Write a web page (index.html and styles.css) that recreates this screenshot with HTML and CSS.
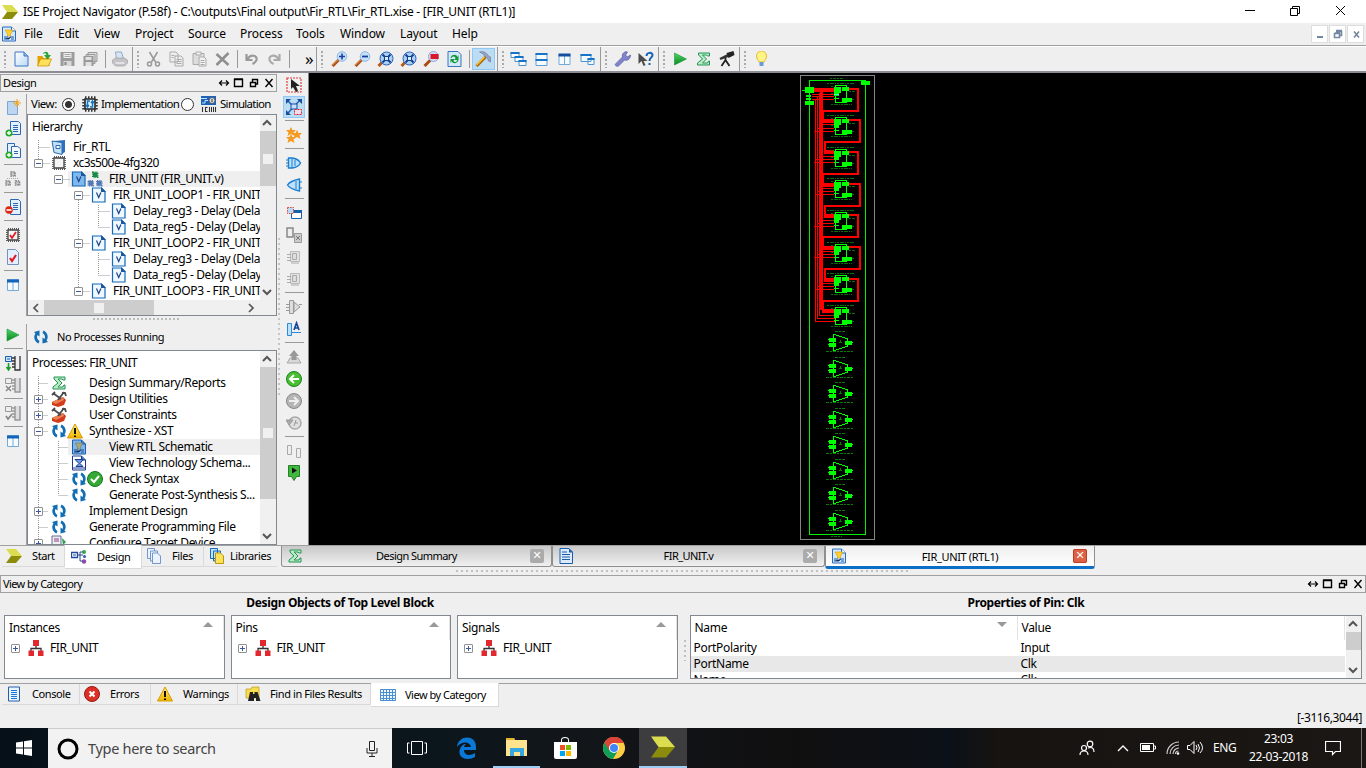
FILE: index.html
```html
<!DOCTYPE html>
<html lang="en">
<head>
<meta charset="utf-8">
<title>ISE Project Navigator</title>
<link rel="stylesheet" href="styles.css">
</head>
<body>
<svg class="defs" width="0" height="0">
<defs>
<linearGradient id="gb" x1="0" y1="0" x2="1" y2="1"><stop offset="0" stop-color="#fff"/><stop offset="1" stop-color="#bcd9f5"/></linearGradient>
<linearGradient id="gg" x1="0" y1="0" x2="0" y2="1"><stop offset="0" stop-color="#4fd36a"/><stop offset="1" stop-color="#078a1b"/></linearGradient>
<linearGradient id="gy" x1="0" y1="0" x2="0" y2="1"><stop offset="0" stop-color="#fff27a"/><stop offset="1" stop-color="#f0b400"/></linearGradient>
</defs>
<symbol id="logo" viewBox="0 0 16 16"><path d="M0 1h10l6 7H5z" fill="#dcdc50"/><path d="M5 8h11l-6 7H0z" fill="#8c8c0c"/></symbol>
<symbol id="rtl" viewBox="0 0 16 16"><path d="M1.500 1h9l4 4v10h-13z" fill="#d5e7fa" stroke="#2a6cc0"/><path d="M10.500 1v4h4" fill="#fff" stroke="#2a6cc0"/><path d="M4 4h8L9.500 8v2h-3V8z" fill="#ffd12e" stroke="#d79c00" stroke-width=".6"/><path d="M3 11h4m2 0h4M3 13h5l2-2m0 2h3" stroke="#1d58a8"/></symbol>
<symbol id="rtls" viewBox="0 0 16 16"><path d="M1.500 1h9l4 4v10h-13z" fill="#7fb5e8" stroke="#1d5cb0"/><path d="M10.500 1v4h4" fill="#3c78c8" stroke="#1d5cb0"/><path d="M4 4h8L9.500 8v2h-3V8z" fill="#a8a878" stroke="#6c7c60" stroke-width=".6"/><path d="M3 11h4m2 0h4M3 13h5l2-2m0 2h3" stroke="#1d4890"/></symbol>
<symbol id="tech" viewBox="0 0 16 16"><path d="M1.500 1h9l4 4v10h-13z" fill="#fff" stroke="#1d3c90"/><path d="M10.500 1v4h4" fill="#3c78c8" stroke="#1d3c90"/><path d="M4 4.500h8l-3 4 3 3H5l3-3z" fill="#6aa0e0" stroke="#1d3c90"/><path d="M2 13h12" stroke="#1d3c90"/></symbol>
<symbol id="new" viewBox="0 0 16 16"><path d="M1.500 1h9l4 4v10h-13z" fill="url(#gb)" stroke="#3a76c4"/><path d="M10.500 1v4h4" fill="#8db9e8" stroke="#3a76c4"/></symbol>
<symbol id="doc" viewBox="0 0 16 16"><path d="M2 .5h9l3.500 3.500v11.500H2z" fill="#dcebfc" stroke="#1b5cab"/><path d="M11 .5v4h4" fill="#1b5cab"/><path d="M4 4h5M4 6.500h8M4 9h8M4 11.500h8" stroke="#1b5cab" stroke-width="1.200"/></symbol>
<symbol id="console" viewBox="0 0 16 16"><path d="M2.500 1h11v14h-11z" fill="#e8f3ff" stroke="#2a5ca8"/><path d="M5 4.500h6M5 6.500h6M5 8.500h6M5 10.500h6M5 12.500h6" stroke="#1878d8"/></symbol>
<symbol id="open" viewBox="0 0 16 16"><path d="M1 5h5l1 2h6v8H1z" fill="#e4a200"/><path d="M4 8h11l-3 7H1z" fill="#ffe05a" stroke="#c88c00" stroke-width=".7"/><path d="M6 3c2-3 6-3 6 1h2.500L11 8.500 7.500 4H10C9.500 2 8 2 6 3z" fill="#29a338"/></symbol>
<symbol id="save" viewBox="0 0 16 16"><path d="M1 1h14v14H1z" fill="#9c9c9c"/><path d="M4 2h8v5H4z" fill="#ececec"/><path d="M4 10h8v5H4z" fill="#d8d8d8"/><path d="M5 11h2v3H5z" fill="#888"/><path d="M5 3.500h6M5 5.500h6" stroke="#aaa"/></symbol>
<symbol id="saveall" viewBox="0 0 16 16"><path d="M5.500 1.500h9v9h-9zM3.500 3.500h9v9h-9z" fill="#ddd" stroke="#999"/><path d="M1 5h10v10H1z" fill="#999"/><path d="M3 6h6v3H3zM3 11h6v4H3z" fill="#e2e2e2"/></symbol>
<symbol id="print" viewBox="0 0 16 16"><path d="M4 1h6l2 7H5z" fill="#d7e5f5" stroke="#8faac8"/><path d="M1 9l3-2h9l3 2v3l-3 3H4l-3-3z" fill="#c4c4c8" stroke="#999" stroke-width=".6"/><path d="M4 12h9" stroke="#fff"/></symbol>
<symbol id="cut" viewBox="0 0 16 16" fill="none" stroke="#999"><path d="M4 1l6 10M12 1L6 11" stroke-width="1.500"/><circle cx="4" cy="13" r="2" stroke-width="1.500"/><circle cx="12" cy="13" r="2" stroke-width="1.500"/></symbol>
<symbol id="copy" viewBox="0 0 16 16" fill="#eee" stroke="#aaa"><path d="M1.500 1h6l2 2v8h-8zM6.500 5h6l2 2v8h-8z"/><path d="M8 8.500h5M8 10.500h5M8 12.500h5M3 4.500h3M3 6.500h2"/></symbol>
<symbol id="paste" viewBox="0 0 16 16" fill="#ddd" stroke="#aaa"><path d="M1.500 2.500h11v11h-11z"/><path d="M4.500 1h5v3h-5zM7.500 6h5l2 2v7h-7z" fill="#f3f3f3"/><path d="M9 9.500h4M9 11.500h4M9 13.500h4"/></symbol>
<symbol id="del" viewBox="0 0 16 16"><path d="M2 3l12 11M14 2L2 14" stroke="#8e8e8e" stroke-width="2.500"/></symbol>
<symbol id="undo" viewBox="0 0 16 16"><path d="M3 3v6h6M4 8c3-5 10-4 9 1-.5 2-2 3-4 4" fill="none" stroke="#999" stroke-width="2.200"/></symbol>
<symbol id="redo" viewBox="0 0 16 16"><path d="M13 3v6H7M12 8C9 3 2 4 3 9c.5 2 2 3 4 4" fill="none" stroke="#aaa" stroke-width="2.200"/></symbol>
<symbol id="zin" viewBox="0 0 16 16"><path d="M1 15l6-6" stroke="#a84c16" stroke-width="3"/><path d="M1 14l5-5" stroke="#f4b15e"/><circle cx="10.500" cy="5.500" r="4.800" fill="#c4e3fb" stroke="#8fb5e4"/><path d="M10.500 2.500v6M7.500 5.500h6" stroke="#1c3f9a" stroke-width="1.600"/></symbol>
<symbol id="zout" viewBox="0 0 16 16"><path d="M1 15l6-6" stroke="#a84c16" stroke-width="3"/><path d="M1 14l5-5" stroke="#f4b15e"/><circle cx="10.500" cy="5.500" r="4.800" fill="#c4e3fb" stroke="#8fb5e4"/><path d="M7.500 5.500h6" stroke="#1c3f9a" stroke-width="1.800"/></symbol>
<symbol id="zfull" viewBox="0 0 16 16"><path d="M1 15l4-4" stroke="#b45a18" stroke-width="3"/><circle cx="9" cy="7.500" r="6.500" fill="#a9d1f6" stroke="#2d61b5"/><path d="M5 3.500l8 8M13 3.500l-8 8" stroke="#123c87" stroke-width="1.800"/><path d="M7 5.500h4v4H7z" fill="#d5edff" stroke="#123c87"/></symbol>
<symbol id="zsel" viewBox="0 0 16 16"><path d="M1 15l6-6" stroke="#a84c16" stroke-width="3"/><circle cx="10" cy="5.500" r="5" fill="#d5dbf4" stroke="#93a5d8"/><path d="M7 3h8v5H7z" fill="#d8172b"/></symbol>
<symbol id="refresh" viewBox="0 0 16 16"><path d="M1.500.500h10l3 3v12h-13z" fill="#d3e8fb" stroke="#3977bd"/><path d="M4 7c1-4 6-4 7-1l1-2v5H8l1-2c-1-2-3-2-4 0zM12 9c-1 4-6 4-7 1l-1 2V8h4L7 10c1 2 3 1 4-1z" fill="#109a33"/></symbol>
<symbol id="hammer" viewBox="0 0 16 16"><path d="M1 15l9-9" stroke="#a9660c" stroke-width="3"/><path d="M1 14l8-8" stroke="#ffc72a" stroke-width="1.500"/><path d="M4 1c5-1 7 1 9 4l2 1v5l-2-1-1-3-3-2-1-2z" fill="#9ba6c5" stroke="#66718f" stroke-width=".6"/></symbol>
<symbol id="casc" viewBox="0 0 16 16"><path d="M.500 1.500h8v5h-8zM4.500 5.500h8v5h-8zM8.500 9.500h7v5h-7z" fill="#fff" stroke="#4b90d0"/><path d="M0 2h9M4 6h9M8 10h8" stroke="#1773c8" stroke-width="2"/></symbol>
<symbol id="tileh" viewBox="0 0 16 16"><path d="M2.500 2.500h11v12h-11z" fill="#f6fbff" stroke="#5ba0d8"/><path d="M2 3h12M2 9h12" stroke="#1875c8" stroke-width="2"/></symbol>
<symbol id="tilev" viewBox="0 0 16 16"><path d="M2.500 3.500h11v10h-11zM8 4v10" fill="#f6fbff" stroke="#75aad8"/><path d="M2 4h12" stroke="#144f9e" stroke-width="3"/></symbol>
<symbol id="winf" viewBox="0 0 16 16"><path d="M1.500 3.500h10v7h-10zM8.500 7.500h6v6h-6z" fill="#f6fbff" stroke="#4b96d6"/><path d="M1 4h11M8 8h7" stroke="#1773c8" stroke-width="2"/></symbol>
<symbol id="wrench" viewBox="0 0 16 16"><path d="M1 13l7-7c-1-3 2-6 5-5l-2 3 2 2 3-2c0 4-3 6-6 5l-6 6c-2 1-4-1-3-2z" fill="#8285c9" stroke="#5356a0" stroke-width=".7"/></symbol>
<symbol id="help" viewBox="0 0 16 16"><path d="M1 2v11l3-3 2 5 2-1-2-4h4z" fill="#4a4a4a"/><path d="M9 5c0-4 6-4 6-1 0 3-3 2-3 6m0 2v2" fill="none" stroke="#1464b4" stroke-width="2"/></symbol>
<symbol id="play" viewBox="0 0 16 16"><path d="M2 2l12 6-12 6z" fill="url(#gg)" stroke="#17953a" stroke-width=".6"/></symbol>
<symbol id="sigma" viewBox="0 0 16 16"><path d="M3 2h11v3h-2l-1-1H7l4 4-4 4h5l1-2h1v4H2v-2l5-4-4-4z" fill="#b9ecc6" stroke="#229554"/></symbol>
<symbol id="scope" viewBox="0 0 16 16"><path d="M1 7l8-4 1 3-8 3z" fill="#333"/><path d="M8 2l7-2 1 4-6 3z" fill="#222"/><path d="M7 7v2l-4 6M7 9l4 6" stroke="#222" stroke-width="1.800" fill="none"/></symbol>
<symbol id="bulb" viewBox="0 0 16 16"><path d="M5.500 11C5 9 3 8 3 5a5 5 0 0110 0c0 3-2 4-2.500 6z" fill="#fff48a" stroke="#e0b000" stroke-width=".8"/><path d="M6 11h4v4H6z" fill="#6d99d8"/></symbol>
<symbol id="newsrc" viewBox="0 0 16 16"><path d="M2.500 2.500h10v13h-10z" fill="#bcd6f2" stroke="#7ea5d2"/><path d="M12 0v8M8 4h8M9.500 1.500l5 5M14.500 1.500l-5 5" stroke="#f6a416"/></symbol>
<symbol id="adddoc" viewBox="0 0 16 16"><path d="M5.500.500h8l2 2v11h-10z" fill="#e3f0ff" stroke="#2c68b2"/><path d="M8 4.500h5M8 6.500h5M8 8.500h5M8 10.500h5" stroke="#2c68b2"/><circle cx="4" cy="12" r="3.500" fill="#25a82c"/><path d="M4 10v4M2 12h4" stroke="#fff" stroke-width="1.300"/></symbol>
<symbol id="addcopy" viewBox="0 0 16 16"><path d="M2.500.500h7v11h-7z" fill="#e3f0ff" stroke="#2c68b2"/><path d="M6.500 3.500h6l3 2v9h-9z" fill="#f2f8ff" stroke="#2c68b2"/><path d="M9 8.500h4M9 10.500h4" stroke="#2c68b2"/><circle cx="4" cy="12" r="3.500" fill="#25a82c"/><path d="M4 10v4M2 12h4" stroke="#fff" stroke-width="1.300"/></symbol>
<symbol id="deldoc" viewBox="0 0 16 16"><path d="M5.500.500h8l2 2v13h-10z" fill="#e3f0ff" stroke="#2c68b2"/><path d="M8 4.500h5M8 6.500h5M8 8.500h5M8 10.500h5" stroke="#2c68b2"/><circle cx="4" cy="11" r="3.800" fill="#dd2714"/><path d="M1.500 11h5" stroke="#fff" stroke-width="1.600"/></symbol>
<symbol id="hier" viewBox="0 0 16 16"><path d="M6 1h4v4H6zM1 10h4v4H1zM10.500 10h4v4h-4z" fill="#c8c8c8" stroke="#888" stroke-width="1.600" stroke-dasharray="1.500 .7"/><path d="M2 7.500h12" stroke="#aaa" stroke-dasharray="1 1"/></symbol>
<symbol id="chip" viewBox="0 0 16 16"><path d="M3 3h10v10H3z" fill="#f6f6f6" stroke="#444" stroke-width="1.300"/><path d="M3 2h11M3 14h11M2 3v11M14 3v11" stroke="#555" stroke-width="1.800" stroke-dasharray="1 1"/></symbol>
<symbol id="chipc" viewBox="0 0 16 16"><use href="#chip"/><path d="M5 8l2 3 4-6" stroke="#e31b23" stroke-width="1.800" fill="none"/></symbol>
<symbol id="chipi" viewBox="0 0 16 16"><path d="M3 3h10v10H3z" fill="#e4f3ff" stroke="#222" stroke-width="1.600"/><path d="M3 1.500h11M3 14.500h11M1.500 3v11M14.500 3v11" stroke="#333" stroke-width="2.500" stroke-dasharray="1.500 1.500"/><path d="M8 5H5.500v5M8 11h2.500V6M4 9l1.500 2L7 9M9 7l1.500-2L12 7" stroke="#1878bd" stroke-width="1.500" fill="none"/></symbol>
<symbol id="doccheck" viewBox="0 0 16 16"><path d="M2.500.500h8l3 3v12h-11z" fill="#e3f0ff" stroke="#7393be"/><path d="M5 9l2 3 4-6" stroke="#e31b23" stroke-width="2.200" fill="none"/></symbol>
<symbol id="cols" viewBox="0 0 16 16"><path d="M2.500 2.500h11v11h-11zM8 4v10" fill="#f6fbff" stroke="#75aad8"/><path d="M2 4h12" stroke="#1265bb" stroke-width="3"/></symbol>
<symbol id="sim" viewBox="0 0 16 16"><path d="M0 0h15v9H0z" fill="#1a63b8"/><path d="M0 2.500h6M1 7h3V4.500h3" stroke="#bfe0ff" fill="none"/><circle cx="11" cy="4.500" r="3" fill="#ddd" stroke="#556"/><path d="M11 3v3" stroke="#333"/><path d="M0 10h16v6H0z" fill="#e6e6e6"/><path d="M1.500 11v5M4 11.500h2.500M4 15.500h2.500M4.500 11v5M8.500 11v5M10.500 11v5M12.500 11v5M14.500 11v5" stroke="#333" fill="none"/></symbol>
<symbol id="proj" viewBox="0 0 16 16"><path d="M3 2l11-1v12l-3 2z" fill="#2e73bd"/><path d="M1 2l10 1.500v12l-8-2z" fill="#c3e0f8" stroke="#2968aa"/><path d="M5 6.500h4v3H5z" fill="#fff" stroke="#2968aa"/></symbol>
<symbol id="v" viewBox="0 0 16 16"><path d="M1.500 1h9l3.500 3.500V15H1.500z" fill="#eff8ff" stroke="#1669b8" stroke-width="1.200"/><path d="M10 0l5 5h-5z" fill="#1b57a0"/><path d="M5.500 5.500l2.200 5 2.200-5" stroke="#1c4288" stroke-width="1.200" fill="none"/></symbol>
<symbol id="vs" viewBox="0 0 16 16"><path d="M1.500 1h9l3.500 3.500V15H1.500z" fill="#7fb8ed" stroke="#1669b8" stroke-width="1.200"/><path d="M10 0l5 5h-5z" fill="#1b57a0"/><path d="M5.500 5.500l2.200 5 2.200-5" stroke="#1c4288" stroke-width="1.200" fill="none"/></symbol>
<symbol id="top" viewBox="0 0 16 16"><path d="M6 1.500h4.500V6H6z" fill="#188a42" stroke="#188a42" stroke-dasharray="1 .7" stroke-width="2"/><path d="M1.500 10H6v4.500H1.500zM10 10h4.500v4.500H10z" fill="#5378b8" stroke="#5378b8" stroke-width="2" stroke-dasharray="1 .7"/></symbol>
<symbol id="cycle" viewBox="0 0 16 16"><path d="M6.500 1.500L1 3l1.500 1.500C0 8 1.500 12.500 5.500 14.500l1-2.500C4 10.500 3.500 8 4.500 6l2 1.500zM9.500 14.500L15 13l-1.500-1.500c2.500-3.500 1-8-3-10l-1 2.500c2.500 1.500 3 4 2 6l-2-1.500z" fill="#126eb4"/></symbol>
<symbol id="tools" viewBox="0 0 16 16"><path d="M1 11l11-5 3 3-2 5-6 2-6-2z" fill="#d03c1c"/><path d="M1 11l11-5 1 3-8 4z" fill="#f08050"/><path d="M2 2l8 6M1 4l3-3M13 1L7 9M11 2h3l1 3" stroke="#4b4b4b" stroke-width="1.800" fill="none"/></symbol>
<symbol id="warn" viewBox="0 0 16 16"><path d="M8 1l7.500 14H.500z" fill="url(#gy)" stroke="#d69b00"/><path d="M8 5v6m0 1.500v1.500" stroke="#111" stroke-width="2"/></symbol>
<symbol id="ok" viewBox="0 0 16 16"><circle cx="8" cy="8" r="7.500" fill="#35a935" stroke="#16751f"/><path d="M4 8l3 3 5-6" stroke="#fff" stroke-width="2" fill="none"/></symbol>
<symbol id="err" viewBox="0 0 16 16"><circle cx="8" cy="8" r="7.500" fill="#dc3027" stroke="#991811"/><path d="M5.500 5.500l5 5m0-5l-5 5" stroke="#fff" stroke-width="2"/></symbol>
<symbol id="conf" viewBox="0 0 16 16"><path d="M1 1h9v9H1z" fill="#eee" stroke="#666b9c"/><path d="M3 4h5M3 6h5" stroke="#8c3c8c"/><path d="M11 3l4 4-3 3z" fill="#27a04a"/></symbol>
<symbol id="arrow" viewBox="0 0 16 16"><path d="M1 1h14v14H1z" fill="none" stroke="#e33b3b" stroke-width="1.200" stroke-dasharray="2 1"/><path d="M5 2v10l2-2 3 5 2-1-2-5h4z" fill="#222"/></symbol>
<symbol id="move" viewBox="0 0 16 16"><path d="M2 2l11 11M14 1L2 14" stroke="#1d65b4" stroke-width="1.500"/><path d="M0 0h5L0 5zM16 0h-5l5 5zM0 16v-5l5 5z" fill="#164f9e"/><path d="M5 5h6v5H5z" fill="#c5e2fb" stroke="#164f9e"/><path d="M8.500 10.500h7v5h-7z" fill="#e8dff0" stroke="#e01f2b" stroke-dasharray="2 1"/></symbol>
<symbol id="stars" viewBox="0 0 16 16" fill="#f59a23"><path id="st" d="M5 0l1.500 3H10L7.500 5.500 8.500 9 5 7 1.500 9l1-3.500L0 3h3.500z"/><use href="#st" x="6" y="3"/><use href="#st" x="0" y="7"/></symbol>
<symbol id="gr" viewBox="0 0 16 16"><path d="M2.500 3h4q6 1 8 5-2 4-8 5h-4z" fill="#bde1fb" stroke="#1c7fd1" stroke-width="1.400"/><path d="M6 3v10M0 5h2M0 8h2M0 11h2M9 5v6" stroke="#1c7fd1"/></symbol>
<symbol id="gl" viewBox="0 0 16 16"><path d="M13.500 2Q4 4 1.500 8q2.500 4 12 6z" fill="#bde1fb" stroke="#1c7fd1" stroke-width="1.400"/><path d="M10 4v8M14 5h2M14 11h2" stroke="#1c7fd1"/></symbol>
<symbol id="selwin" viewBox="0 0 16 16"><path d="M5.500 5.500h10v8h-10z" fill="#fff" stroke="#1460ad"/><path d="M5 6.500h11" stroke="#1460ad" stroke-width="3"/><path d="M1.500 2.500h6v6h-6z" fill="#b8d8f7" stroke="#e14b2c" stroke-dasharray="1.500 1"/></symbol>
<symbol id="two" viewBox="0 0 16 16"><path d="M1 1h6v9H1z" fill="#eee" stroke="#888" stroke-width="1.500"/><path d="M8.500 6.500h7v9h-7z" fill="#ccc" stroke="#999"/><path d="M10 9l4 4m0-4l-4 4" stroke="#777"/></symbol>
<symbol id="gchip" viewBox="0 0 16 16"><path d="M4.500 2.500h9v10h-9z" fill="#e2e2e2" stroke="#bbb"/><path d="M6.500 4.500h4v6h-4zM1 5.500h4M1 8.500h4M1 11.500h4M13 14H5" fill="#ddd" stroke="#aaa"/></symbol>
<symbol id="ggate" viewBox="0 0 16 16"><path d="M3.500 1.500h4v13h-4zM8 3l6 5-6 5z" fill="#ddd" stroke="#999"/><path d="M0 5.500h3M0 8.500h3M0 11.500h3M13 5.500h3" stroke="#999"/></symbol>
<symbol id="fa" viewBox="0 0 16 16"><path d="M1.500 2.500h4v12h-4zM5 11.500h10" fill="#bde1fb" stroke="#2c8add"/><path d="M8 9l2.500-7L13 9M9 7h3" stroke="#174a98" stroke-width="1.700" fill="none"/></symbol>
<symbol id="gup" viewBox="0 0 16 16"><path d="M4 9h8l3 5H1z" fill="#d8d8d8" stroke="#aaa"/><path d="M8 1l5 6h-2.500v4h-5V7H3z" fill="#999"/></symbol>
<symbol id="back" viewBox="0 0 16 16"><circle cx="8" cy="8" r="7.500" fill="#46be2f" stroke="#16851f"/><path d="M13 8H4m4-4L4 8l4 4" stroke="#fff" stroke-width="2" fill="none"/></symbol>
<symbol id="fwd" viewBox="0 0 16 16"><circle cx="8" cy="8" r="7.500" fill="#b4b4b4" stroke="#888"/><path d="M3 8h9M8 4l4 4-4 4" stroke="#eee" stroke-width="2" fill="none"/></symbol>
<symbol id="hist" viewBox="0 0 16 16"><circle cx="9" cy="8" r="6" fill="#e0e0e0" stroke="#aaa" stroke-width="1.500"/><path d="M0 5h7l-4 5zM9 8h3M10 5L8 11" fill="#aaa" stroke="#999"/></symbol>
<symbol id="rects" viewBox="0 0 16 16"><path d="M1.500 2.500h4v9h-4zM10.500 5.500h4v9h-4z" fill="#eee" stroke="#aaa"/></symbol>
<symbol id="mark" viewBox="0 0 16 16"><path d="M2.500.500h11v11h-3l-2.500 4-2.500-4h-3z" fill="#40b83d" stroke="#267e28"/><path d="M6 2.500l5 3-5 3z" fill="#111"/></symbol>
<symbol id="pd" viewBox="0 0 16 16"><path d="M.500 1.500h6v5h-6z" fill="#cfe5fb" stroke="#1b5da8"/><path d="M2 4h3" stroke="#1b5da8"/><path d="M3.500 8v6m-2-2l2 3 2-3" stroke="#159d24" stroke-width="1.500" fill="none"/><path d="M10 1v14h5V1M7 3h3m-3 3h3m-3 3h3m-3 3h3" stroke="#333" stroke-width="1.300" fill="none"/></symbol>
<symbol id="px" viewBox="0 0 16 16"><path d="M.500 1.500h6v5h-6z" fill="#eee" stroke="#999"/><path d="M1 9l5 5m0-5l-5 5" stroke="#888" stroke-width="1.500"/><path d="M10 1v14h5V1M7 3h3m-3 3h3m-3 3h3m-3 3h3" stroke="#999" stroke-width="1.500" fill="#ddd"/></symbol>
<symbol id="pc" viewBox="0 0 16 16"><path d="M.500 1.500h6v5h-6z" fill="#eee" stroke="#999"/><path d="M1 11l2 3 4-5" stroke="#888" stroke-width="1.700" fill="none"/><path d="M10 1v14h5V1M7 3h3m-3 3h3m-3 3h3m-3 3h3" stroke="#999" stroke-width="1.500" fill="#ddd"/></symbol>
<symbol id="dsg" viewBox="0 0 16 16"><path d="M.500 3.500h6v5h-6z" fill="#fff" stroke="#234a9b" stroke-width="1.300"/><path d="M2 6h3M7 6h5M9 3v9M9 3h3M9 12h3" stroke="#234a9b"/><circle cx="13" cy="3" r="2" fill="#3aa04a"/><circle cx="13.500" cy="7.500" r="1.500" fill="#3459ad"/><circle cx="13" cy="12.500" r="2.200" fill="#884aa8"/></symbol>
<symbol id="files" viewBox="0 0 16 16" fill="#eaf3ff" stroke="#7297cc"><path d="M1.500.500h7v10h-7z"/><path d="M4.500 3h7v10h-7z"/><path d="M6.500 5h5l3 3v7.500h-8z"/></symbol>
<symbol id="libs" viewBox="0 0 16 16"><path d="M1.500.500h7v10h-7zM4.500 3h7v10h-7z" fill="#bfe0ff" stroke="#1769b4"/><path d="M6.500 5h5l3 3v7.500h-8z" fill="#ffe25a" stroke="#b99810"/></symbol>
<symbol id="find" viewBox="0 0 16 16"><path d="M1 3h5l1-2h7v11H1z" fill="#f8dc50" stroke="#b58a00" stroke-width=".6"/><path d="M5 6h3v2h1.500V6h3l3 9h-4.500v-3H9v3H3z" fill="#222"/></symbol>
<symbol id="grid" viewBox="0 0 16 16"><path d="M.500 2.500h15v11H.500zM3.500 2v12M6.500 2v12M9.500 2v12M12.500 2v12M0 5.500h16M0 8.500h16M0 11.500h16" fill="#eef7ff" stroke="#4a8ed0"/></symbol>
<symbol id="inst" viewBox="0 0 16 16"><path d="M8 6v3M3 11V8.500h10V11" stroke="#333" stroke-width="1.300" fill="none"/><path d="M5 0h6v6H5zM.500 10.500H6V16H.500zM10 10.500h5.500V16H10z" fill="#e2282e"/></symbol>
<symbol id="up" viewBox="0 0 16 16"><path d="M4 10l4-4 4 4" fill="none" stroke="#555" stroke-width="2"/></symbol>
<symbol id="dn" viewBox="0 0 16 16"><path d="M4 6l4 4 4-4" fill="none" stroke="#555" stroke-width="2"/></symbol>
<symbol id="lf" viewBox="0 0 16 16"><path d="M10 4L6 8l4 4" fill="none" stroke="#555" stroke-width="1.700"/></symbol>
<symbol id="rt" viewBox="0 0 16 16"><path d="M6 4l4 4-4 4" fill="none" stroke="#555" stroke-width="1.700"/></symbol>
<symbol id="dock" viewBox="0 0 60 12"><path d="M3.500 6h9M6 3.500L3.500 6 6 8.500M10 3.500L12.500 6 10 8.500" fill="none" stroke="#000" stroke-width="1.200"/><path d="M18.500 2.500h8v7h-8zM18 2h9M34.500 5.500h5v4h-5zM36.500 5V2.500h5V7h-2M34 5.500h6M36 2.500h6M49.500 2l7 8M56.500 2l-7 8" fill="none" stroke="#000" stroke-width="1.400"/></symbol>
</svg>

<header class="title">
  <svg class="i"><use href="#logo"/></svg><span class="cap">ISE Project Navigator (P.58f) - C:\outputs\Final output\Fir_RTL\Fir_RTL.xise - [FIR_UNIT (RTL1)]</span>
  <svg class="winbtn" width="120" height="23" viewBox="0 0 120 23"><path d="M5 10.500h10M50.500 8.500h7v7h-7zM52.500 8V6.500h7v7H58M96 6l9 9M105 6l-9 9" fill="none" stroke="#000"/></svg>
</header>

<nav class="menu">
  <svg class="i"><use href="#rtl"/></svg>
  <span class="m1">File</span><span class="m2">Edit</span><span class="m3">View</span><span class="m4">Project</span><span class="m5">Source</span><span class="m6">Process</span><span class="m7">Tools</span><span class="m8">Window</span><span class="m9">Layout</span><span>Help</span>
  <svg class="mdi" width="54" height="20" viewBox="0 0 54 20"><path d="M.500 1.500h16v17h-16zM18.500 1.500h16v17h-16zM36.500 1.500h16v17h-16z" fill="#fff" stroke="#ddd"/><path d="M6 13h6" stroke="#7388a0" stroke-width="2"/><path d="M23.500 9.500h5v4h-5zM25 7.500h5.500v4H29M24 9h5M25 6.500h6M43 7.500l5 6m0-6l-5 6" fill="none" stroke="#7388a0" stroke-width="1.600"/></svg>
</nav>

<div class="tools">
  <div class="g g1"><b class="grip"></b><svg><use href="#new"/></svg><svg><use href="#open"/></svg><svg><use href="#save"/></svg><svg><use href="#saveall"/></svg><s></s><svg><use href="#print"/></svg></div>
  <div class="g g2"><b class="grip"></b><svg><use href="#cut"/></svg><svg><use href="#copy"/></svg><svg><use href="#paste"/></svg><svg><use href="#del"/></svg><s></s><svg><use href="#undo"/></svg><svg><use href="#redo"/></svg><s></s><span class="more">»</span></div>
  <div class="g g3"><b class="grip"></b><svg><use href="#zin"/></svg><svg><use href="#zout"/></svg><svg><use href="#zfull"/></svg><svg><use href="#zfull"/></svg><svg><use href="#zsel"/></svg><svg><use href="#refresh"/></svg><s></s><svg class="on"><use href="#hammer"/></svg></div>
  <div class="g g4"><b class="grip"></b><svg><use href="#casc"/></svg><svg><use href="#tileh"/></svg><svg><use href="#tilev"/></svg><svg><use href="#winf"/></svg></div>
  <div class="g g5"><b class="grip"></b><svg><use href="#wrench"/></svg><svg><use href="#help"/></svg></div>
  <div class="g g6"><b class="grip"></b><svg><use href="#play"/></svg><svg><use href="#sigma"/></svg><svg><use href="#scope"/></svg></div>
  <div class="g g7"><b class="grip"></b><svg><use href="#bulb"/></svg></div>
</div>

<main class="main">
  <section class="left">
    <div class="dockhead"><span>Design</span><svg width="60" height="12"><use href="#dock"/></svg></div>
    <div class="pane p1">
      <div class="side"><svg><use href="#newsrc"/></svg><svg><use href="#adddoc"/></svg><svg><use href="#addcopy"/></svg><s></s><svg><use href="#hier"/></svg><s></s><svg><use href="#deldoc"/></svg><s></s><svg><use href="#chipc"/></svg><svg><use href="#doccheck"/></svg><s></s><svg><use href="#cols"/></svg></div>
      <div class="col">
        <div class="view"><span class="vl">View:</span><i class="radio sel"></i><svg class="i a"><use href="#chipi"/></svg><span class="im">Implementation</span><i class="radio"></i><svg class="i b"><use href="#sim"/></svg><span class="si">Simulation</span></div>
        <div class="box">
          <div class="upper">
            <div class="tree">
              <svg class="lines" width="232" height="185"><path d="M10.500 25v20M10.500 32.500h11M10.500 48.500h11M30.500 64.500h11M50.500 80.500h11M50.500 85v96M50.500 128.500h11M50.500 176.500h11M70.500 90v21.500M70.500 96.500h11M70.500 112.500h11M70.500 138v21.500M70.500 144.500h11M70.500 160.500h11" stroke="#999" stroke-dasharray="1 1" fill="none"/></svg>
              <div class="th">Hierarchy</div>
              <div class="row"><i></i><svg class="i"><use href="#proj"/></svg><span>Fir_RTL</span></div>
              <div class="row"><i class="x"></i><svg class="i"><use href="#chip"/></svg><span class="t320">xc3s500e-4fg320</span></div>
              <div class="row k1 hl"><i class="x"></i><svg class="i"><use href="#vs"/></svg><svg class="i"><use href="#top"/></svg><span>FIR_UNIT (FIR_UNIT.v)</span></div>
              <div class="row k2"><i class="x"></i><svg class="i"><use href="#v"/></svg><span>FIR_UNIT_LOOP1 - FIR_UNIT</span></div>
              <div class="row k3"><i></i><svg class="i"><use href="#v"/></svg><span>Delay_reg3 - Delay (Delay</span></div>
              <div class="row k3"><i></i><svg class="i"><use href="#v"/></svg><span>Data_reg5 - Delay (Delay</span></div>
              <div class="row k2"><i class="x"></i><svg class="i"><use href="#v"/></svg><span>FIR_UNIT_LOOP2 - FIR_UNIT</span></div>
              <div class="row k3"><i></i><svg class="i"><use href="#v"/></svg><span>Delay_reg3 - Delay (Delay</span></div>
              <div class="row k3"><i></i><svg class="i"><use href="#v"/></svg><span>Data_reg5 - Delay (Delay</span></div>
              <div class="row k2"><i class="x"></i><svg class="i"><use href="#v"/></svg><span>FIR_UNIT_LOOP3 - FIR_UNIT</span></div>
            </div>
            <div class="vs"><svg class="i"><use href="#up"/></svg><b class="th1"><u></u></b><svg class="i"><use href="#dn"/></svg></div>
          </div>
          <div class="hs"><svg class="i"><use href="#lf"/></svg><b><u></u></b><svg class="i"><use href="#rt"/></svg></div>
        </div>
      </div>
    </div>
    <div class="hdots"></div>
    <div class="pane p2">
      <div class="side"><svg><use href="#play"/></svg><s></s><svg><use href="#pd"/></svg><svg><use href="#px"/></svg><s></s><svg><use href="#pc"/></svg><s></s><svg><use href="#cols"/></svg></div>
      <div class="col">
        <div class="status"><svg class="i"><use href="#cycle"/></svg><span>No Processes Running</span></div>
        <div class="box proc">
          <div class="tree">
            <svg class="lines" width="232" height="193"><path d="M10.500 25v168M10.500 32.500h10M10.500 48.500h10M10.500 64.500h10M10.500 80.500h10M30.500 90v54M30.500 96.500h10M30.500 112.500h10M30.500 128.500h10M30.500 144.500h10M10.500 160.500h10M10.500 176.500h10" stroke="#999" stroke-dasharray="1 1" fill="none"/></svg>
            <div class="th">Processes: FIR_UNIT</div>
            <div class="row"><i></i><em><svg class="i"><use href="#sigma"/></svg></em><span>Design Summary/Reports</span></div>
            <div class="row"><i class="x p"></i><em><svg class="i"><use href="#tools"/></svg></em><span>Design Utilities</span></div>
            <div class="row"><i class="x p"></i><em><svg class="i"><use href="#tools"/></svg></em><span>User Constraints</span></div>
            <div class="row"><i class="x"></i><em><svg class="i"><use href="#cycle"/></svg><svg class="i"><use href="#warn"/></svg></em><span>Synthesize - XST</span></div>
            <div class="row k1 hl"><i></i><em><svg class="i"><use href="#rtls"/></svg></em><span>View RTL Schematic</span></div>
            <div class="row k1"><i></i><em><svg class="i"><use href="#tech"/></svg></em><span>View Technology Schema...</span></div>
            <div class="row k1"><i></i><em><svg class="i"><use href="#cycle"/></svg><svg class="i"><use href="#ok"/></svg></em><span>Check Syntax</span></div>
            <div class="row k1"><i></i><em><svg class="i"><use href="#cycle"/></svg></em><span>Generate Post-Synthesis S...</span></div>
            <div class="row"><i class="x p"></i><em><svg class="i"><use href="#cycle"/></svg></em><span>Implement Design</span></div>
            <div class="row"><i></i><em><svg class="i"><use href="#cycle"/></svg></em><span>Generate Programming File</span></div>
            <div class="row"><i class="x p"></i><em><svg class="i"><use href="#conf"/></svg></em><span>Configure Target Device</span></div>
          </div>
          <div class="vs"><svg class="i"><use href="#up"/></svg><b class="th2"><u></u></b><svg class="i"><use href="#dn"/></svg></div>
        </div>
      </div>
    </div>
  </section>
  <div class="vdots"></div>
  <div class="mid"><svg><use href="#arrow"/></svg><svg class="on"><use href="#move"/></svg><s></s><svg><use href="#stars"/></svg><s></s><svg><use href="#gr"/></svg><svg><use href="#gl"/></svg><s></s><svg><use href="#selwin"/></svg><svg><use href="#two"/></svg><svg><use href="#gchip"/></svg><svg><use href="#gchip"/></svg><s></s><svg><use href="#ggate"/></svg><svg><use href="#fa"/></svg><s></s><svg><use href="#gup"/></svg><svg><use href="#back"/></svg><svg><use href="#fwd"/></svg><svg><use href="#hist"/></svg><s></s><svg><use href="#rects"/></svg><svg><use href="#mark"/></svg></div>
  <div class="canvas">
    <svg width="1057" height="472" viewBox="309 73 1057 472" shape-rendering="crispEdges">
      <defs>
        <g id="blk"><path d="M835.500 .5v17h11v-17z" fill="none" stroke="#0f0"/><path d="M834 2h7v6h-2v2h-5zM842 2h7v4h-7zM842 13h10v4h-10z" fill="#0f0"/><path d="M834 10.500h5M834 13.500h5" stroke="#0f0"/><path d="M827-1.500h28M831 19.500h21M849 6.500h6M831 1.500h3M852 14.500h3M831 8.500h3" stroke="#0b6a0b" stroke-dasharray="2 1 4 1 1 1"/></g>
        <g id="mx"><path d="M833.500-8v17M833-7.500h3M836-6.500h3M839-5.500h3M842-4.500h3M845-3.500h3M847.500-3v7M845 4.500h3M842 5.500h3M839 6.500h3M836 7.500h3M833 8.500h3" fill="none" stroke="#0f0"/><path d="M829-4h7v4h-7zM829 1h7v4h-7zM845-1h7v4h-7zM828-3h2v1h-2zM828 2h2v1h-2zM852 0h1v1h-1z" fill="#0f0"/><path d="M835-10.500h10M826 9.500h28M840.500-2v4M839 .5h3" stroke="#0a780a" stroke-dasharray="3 1 2 1"/></g>
      </defs>
      <path d="M800.500 75.500h74v464h-74z" fill="none" stroke="#858585"/>
      <path d="M809.500 80.500h56v454h-56z" fill="none" stroke="#0e0"/>
      <path d="M830 78.500h14M831 536.500h11" stroke="#0b6a0b" stroke-dasharray="2 1 3 1"/>
      <path d="M815.500 99v222.500h19M817.500 97v221.500h17M819.500 93v222.500h15M822 90v221h12" fill="none" stroke="red"/>
      <path d="M821.500 90v220" stroke="red" stroke-width="3"/>
      <path d="M812 90h22" stroke="red" stroke-width="4"/>
      <path d="M812 94.500h22M812 96.500h22M812 99.500h22M814 131.500h20M817 128.500h17M814 162.500h20M816 159.500h18M815 194.500h19M817 191.500h17M814 226.500h20M817 223.500h17M814 257.500h20M817 254.500h17M815 289.500h19M817 286.500h17M819 124.500h15M819 156.500h15M819 188.500h15M819 220.500h15M819 251.500h15M819 283.500h15" stroke="red"/>
      <path d="M849 89h9v22H823v10.500h12M849 120h11v22H825v10.500h10M849 152h9v22H823v11.500h12M849 184h11v22H825v9h10M849 215h9v22H823v11h12M849 247h11v22H825v11h10M849 279h9v22H823v11h12" fill="none" stroke="red" stroke-width="2"/>
      <path d="M822 121h12M824 152h10M822 185h12M824 216h10M822 248h12M824 280h10M822 311h12" stroke="red" stroke-width="4"/>
      <path d="M805 87h9v6h-9zM806 95h5v2h-5zM806 98h5v2h-5zM805 101h9v4h-9zM861 81h9v4h-9zM802 90h3v1h-3z" fill="#0f0"/>
      <use href="#blk" y="85"/><use href="#blk" y="117"/><use href="#blk" y="149"/><use href="#blk" y="180"/><use href="#blk" y="212"/><use href="#blk" y="244"/><use href="#blk" y="275"/><use href="#blk" y="307"/>
      <path d="M834 94.500h5" stroke="#3fb" />
      <use href="#mx" y="342"/><use href="#mx" y="368"/><use href="#mx" y="393"/><use href="#mx" y="419"/><use href="#mx" y="444"/><use href="#mx" y="470"/><use href="#mx" y="495"/><use href="#mx" y="521"/>
    </svg>
  </div>
</main>

<div class="tabs">
  <div class="ltabs"><div class="lt w1"><svg class="i"><use href="#logo"/></svg><span>Start</span></div><div class="lt w2 act"><svg class="i"><use href="#dsg"/></svg><span>Design</span></div><div class="lt w3"><svg class="i"><use href="#files"/></svg><span>Files</span></div><div class="lt w4"><svg class="i"><use href="#libs"/></svg><span>Libraries</span></div></div>
  <div class="dtabs"><div class="dt w5"><svg class="i"><use href="#sigma"/></svg><span>Design Summary</span><b class="cl">✕</b></div><div class="dt w6"><svg class="i"><use href="#doc"/></svg><span>FIR_UNIT.v</span><b class="cl">✕</b></div><div class="dt w7 cur"><svg class="i"><use href="#rtl"/></svg><span>FIR_UNIT (RTL1)</span><b class="cl red">✕</b></div></div>
</div>
<div class="bdots"></div>
<div class="dockhead bottom"><span>View by Category</span><svg width="60" height="12"><use href="#dock"/></svg></div>
<div class="heads"><b>Design Objects of Top Level Block</b><b class="h2">Properties of Pin: Clk</b></div>
<div class="lists">
  <div class="lb"><div class="lh"><span>Instances</span><i></i></div><div class="lr"><i class="x p"></i><svg class="i"><use href="#inst"/></svg><span>FIR_UNIT</span></div></div>
  <div class="lb"><div class="lh"><span>Pins</span><i></i></div><div class="lr"><i class="x p"></i><svg class="i"><use href="#inst"/></svg><span>FIR_UNIT</span></div></div>
  <div class="lb"><div class="lh"><span>Signals</span><i></i></div><div class="lr"><i class="x p"></i><svg class="i"><use href="#inst"/></svg><span>FIR_UNIT</span></div></div>
  <div class="sdots"></div>
  <div class="props"><div class="pt"><div class="pr ph"><span>Name<i></i></span><span>Value</span></div><div class="pr"><span>PortPolarity</span><span>Input</span></div><div class="pr g"><span>PortName</span><span>Clk</span></div><div class="pr"><span>Name</span><span>Clk</span></div></div><div class="vs"><svg class="i"><use href="#up"/></svg><b class="th3"></b><svg class="i"><use href="#dn"/></svg></div></div>
</div>
<div class="btabs"><div class="lt c1"><svg class="i"><use href="#console"/></svg><span>Console</span></div><div class="lt c2"><svg class="i"><use href="#err"/></svg><span>Errors</span></div><div class="lt c3"><svg class="i"><use href="#warn"/></svg><span>Warnings</span></div><div class="lt c4"><svg class="i"><use href="#find"/></svg><span>Find in Files Results</span></div><div class="lt c5 act"><svg class="i"><use href="#grid"/></svg><span>View by Category</span></div></div>
<div class="coord">[-3116,3044]</div>

<footer class="task">
  <div class="cell start"><svg width="16" height="16" viewBox="0 0 16 16"><path d="M0 2.500l7-1v6H0zM8 1.300L16 0v7.500H8zM0 8.500h7v6l-7-1zM8 8.500h8V16l-8-1.300z" fill="#fff"/></svg></div>
  <div class="search"><svg width="22" height="22" viewBox="0 0 22 22"><circle cx="11" cy="11" r="9" fill="none" stroke="#000" stroke-width="3"/></svg><span>Type here to search</span><svg width="12" height="18" viewBox="0 0 12 18"><path d="M3.500 1.500h5v9h-5zM1 8v5h10V8M6 13v4M3 16.500h6" fill="none" stroke="#222"/></svg></div>
  <div class="cell"><svg width="20" height="16" viewBox="0 0 20 16"><path d="M4.500 1.500h11v13h-11zM2.500 3h-2v10h2M17.500 3h2v10h-2" fill="none" stroke="#fff"/></svg></div>
  <div class="cell ed"><svg width="22" height="22" viewBox="0 0 22 22"><path d="M1 10C2-2 20-3 20 10v3H8c0 6 7 6 11 3v4C10 25 1 20 4 12c1-3 3-5 6-5-1 1-2 2-2 3h7C14 4 5 4 1 10z" fill="#0a78d7"/></svg></div>
  <div class="cell fx"><svg width="22" height="20" viewBox="0 0 22 20"><path d="M0 1h8l1 2h12v16H0z" fill="#ffe38e"/><path d="M0 1h8l1 2H0z" fill="#e4b32c"/><path d="M4 11h14v8h-4v-4H8v4H4z" fill="#35a8e0"/></svg></div>
  <div class="cell"><svg width="24" height="24" viewBox="0 0 24 24"><path d="M1 6h23v15q0 2-2 2H3q-2 0-2-2zM8 6V4q0-3 4-3t4 3v2h-1V4q0-2-3-2T9 4v2z" fill="#fff"/><path d="M7 9h5v5H7z" fill="#f25022"/><path d="M13 9h5v5h-5z" fill="#7fba00"/><path d="M7 15h5v5H7z" fill="#00a4ef"/><path d="M13 15h5v5h-5z" fill="#ffb900"/></svg></div>
  <div class="cell"><svg width="22" height="22" viewBox="0 0 22 22"><circle cx="11" cy="11" r="11" fill="#ffcd40"/><path d="M1.500 5.500A11 11 0 0010 22l5-8.500-8-.500z" fill="#0f9d58"/><path d="M11 6h10A11 11 0 001.500 5.500L6 13z" fill="#db4437"/><circle cx="11" cy="11" r="5" fill="#fff"/><circle cx="11" cy="11" r="4" fill="#4285f4"/></svg></div>
  <div class="cell ise"><svg width="26" height="24"><use href="#logo"/></svg></div>
  <div class="tray">
    <svg class="ppl" width="16" height="16" viewBox="0 0 16 16" fill="none" stroke="#fff" stroke-width="1.200"><circle cx="5" cy="8" r="2.500"/><path d="M1 15q0-4 4-4t4 4"/><circle cx="11" cy="4" r="2.800"/><path d="M9 8q6-2 6 4"/></svg>
    <svg class="crt" width="12" height="8" viewBox="0 0 12 8"><path d="M1 7l5-5 5 5" fill="none" stroke="#fff" stroke-width="1.300"/></svg>
    <svg class="bat" width="16" height="10" viewBox="0 0 16 10"><path d="M.500 .500h13v8h-13zM14 3h1.500v3H14" fill="none" stroke="#fff"/><path d="M2 2h8v5H2z" fill="#fff"/></svg>
    <svg class="wif" width="14" height="14" viewBox="0 0 14 14"><path d="M1 13A12 12 0 0113 1M4 13a9 9 0 019-9M7 13a6 6 0 016-6M9.500 13a3 3 0 013-3" fill="none" stroke="#ccc" stroke-width="1.200"/><circle cx="12" cy="12.500" r="1.300" fill="#fff"/></svg>
    <svg class="vol" width="16" height="14" viewBox="0 0 16 14"><path d="M.500 4.500H3l4-4v12l-4-4H.500zM9 4q2 3 0 5M11 3q3 4 0 8M13 1q5 6 0 11" fill="none" stroke="#fff"/></svg>
    <span class="eng">ENG</span>
    <span class="clock"><span>23:03</span><span>22-03-2018</span></span>
    <svg class="ntf" width="16" height="16" viewBox="0 0 16 16"><path d="M.500 1.500h15v10h-5l-3 3v-3h-7z" fill="none" stroke="#fff" stroke-width="1.200"/></svg>
  </div>
</footer>
</body>
</html>
```
FILE: styles.css
```css
* { box-sizing: border-box; }
body { margin: 0; width: 1366px; height: 768px; overflow: hidden; background: #efefef; color: #000; font: 12px/16px "Noto Sans", "Open Sans", sans-serif; letter-spacing: -0.35px; display: flex; flex-direction: column; }
body > * { flex: none; }
.defs { position: absolute; width: 0; height: 0; }
svg { display: block; flex: none; }
.i { width: 16px; height: 16px; }
i, em { font-style: normal; }
span { white-space: nowrap; }

.title { height: 23px; background: #fff; display: flex; align-items: center; padding-left: 2px; }
.cap { margin-left: 5px; letter-spacing: -0.28px; }
.winbtn { margin-left: auto; margin-right: 6px; width: 120px; }
.menu { height: 23px; display: flex; align-items: center; padding-left: 1px; border-bottom: 1px solid #a0a0a0; letter-spacing: -0.1px; }
.menu span { padding-left: 7px; }
.menu .m1 { width: 34px; } .menu .m2 { width: 36px; } .menu .m3 { width: 41px; } .menu .m4 { width: 53px; } .menu .m5 { width: 52px; } .menu .m6 { width: 56px; } .menu .m7 { width: 44px; } .menu .m8 { width: 60px; } .menu .m9 { width: 52px; }
.mdi { margin-left: auto; margin-right: 1px; }
.tools { height: 27px; display: flex; border-top: 1px solid #fff; border-bottom: 2px solid #8b8d92; }
.g { display: flex; align-items: center; border-right: 1px solid #999; }
.g svg { width: 23px; height: 22px; padding: 3px; }
.g1 { width: 133px; } .g2 { width: 184px; } .g3 { width: 181px; } .g4 { width: 103px; } .g5 { width: 58px; } .g6 { width: 81px; } .g7 { border: 0; }
.grip { width: 10px; height: 18px; background: radial-gradient(circle at 5px 2px, #aaa 1px, transparent 1.5px) 0 0 / 10px 4px; }
.g4 .grip, .g2 .grip { width: 9px; }
.g3 .grip { width: 11px; }
.g s, .side s, .mid s { flex: none; background: #999; }
.g s { width: 1px; height: 18px; margin: 0 2px 0 3px; }
.more { margin-left: 13px; font-size: 17px; }
.on { background: #bcdcf4; outline: 1px solid #90c8f6; outline-offset: -1px; }

.main { height: 472px; display: flex; }
.left { width: 277px; display: flex; flex-direction: column; }
.dockhead { height: 18px; margin-top: 1px; border: 1px solid #a0a0a0; display: flex; align-items: center; justify-content: space-between; padding: 0 0 0 2px; flex: none; }
.dockhead span { font-size: 11px; letter-spacing: -0.4px; }
.pane { display: flex; }
.p1 { height: 224px; padding-top: 2px; }
.p2 { height: 223px; padding-top: 2px; }
.side { width: 27px; border-right: 1px solid #a0a0a0; display: flex; flex-direction: column; align-items: center; padding: 2px 0 0 0; }
.p2 .side { padding-top: 0; }
.side svg { width: 16px; height: 22px; }
.side s, .mid s { width: 19px; height: 1px; margin: 2px 0 3px; }
.col { width: 250px; display: flex; flex-direction: column; }
.view { height: 20px; display: flex; align-items: center; padding-left: 4px; font-size: 11.5px; letter-spacing: -0.5px; }
.vl { width: 31px; }
.radio { width: 13px; height: 13px; flex: none; border: 1px solid #333; border-radius: 50%; background: #fff; }
.sel { background: radial-gradient(#333 3px, #fff 4px); }
.view .a { margin-left: 7px; } .im { width: 80px; margin-left: 3px; } .view .b { margin-left: 7px; } .si { margin-left: 3px; letter-spacing: -0.7px; } .im { letter-spacing: -0.65px; }
.box { border: 1px solid #828790; background: #fff; flex: 1; min-height: 0; overflow: hidden; }
.upper, .proc { display: flex; }
.upper { height: 185px; }
.tree { width: 232px; position: relative; overflow: hidden; }
.lines { position: absolute; left: 0; top: 0; }
.th { height: 24px; padding: 4px 0 0 4px; letter-spacing: -0.45px; }
.row { height: 16px; display: flex; align-items: center; padding-left: 6px; letter-spacing: -0.38px; }
.row > *, .lr > * { position: relative; }
.row > i, .lr > i { width: 9px; height: 9px; flex: none; margin-right: 8px; }
.row span { margin-left: 6px; }
.t320 { letter-spacing: -0.6px; }
.row em { width: 32px; display: flex; flex: none; }
.k1 { padding-left: 26px; } .k2 { padding-left: 46px; } .k3 { padding-left: 66px; }
.hl { background: linear-gradient(90deg, transparent 40px, #efefef 40px); }
.x { border: 1px solid #919191; border-radius: 1px; background: linear-gradient(#3b5a9b, #3b5a9b) center / 5px 1px no-repeat #fff; }
.p { background: linear-gradient(#3b5a9b, #3b5a9b) center / 5px 1px no-repeat, linear-gradient(#3b5a9b, #3b5a9b) center / 1px 5px no-repeat #fff; }
.vs { width: 16px; background: #f0f0f0; display: flex; flex-direction: column; }
.vs .i { margin-left: -1px; }
.vs b { background: #cdcdcd; margin-bottom: auto; display: flex; align-items: center; justify-content: center; }
.vs u, .hs u { width: 10px; height: 10px; background: #f0f0f0; }
.th1 { height: 55px; } .th2 { height: 132px; } .th3 { height: 18px; }
.hs { height: 15px; background: #f0f0f0; display: flex; }
.hs b { width: 110px; background: #cdcdcd; display: flex; align-items: center; justify-content: center; margin-right: 89px; }
.hdots { height: 6px; margin-left: 92px; width: 88px; background: radial-gradient(circle at 2px 3px, #bbb 1px, transparent 1.5px) 0 0 / 4px 6px; }
.status { height: 26px; display: flex; align-items: center; padding-left: 6px; gap: 8px; font-size: 11px; letter-spacing: -0.42px; }
.vdots { width: 4px; background: radial-gradient(circle at 2px 2px, #c5c5c5 1px, transparent 1.5px) 0 0 / 5px 5px; height: 160px; margin-top: 164px; }
.mid { width: 27px; padding-right: 1px; background: #f0f0f0; display: flex; flex-direction: column; align-items: center; padding-top: 1px; }
.mid svg { width: 22px; height: 22px; padding: 3px; }
.canvas { width: 1058px; background: #000; border-left: 1px solid #82858c; }

.tabs { height: 24px; display: flex; border-top: 1px solid #a0a0a0; font-size: 11px; letter-spacing: -0.4px; }
.ltabs { display: flex; padding-left: 2px; width: 281px; margin-top: -1px; }
.lt { display: flex; align-items: center; height: 22px; border-right: 1px solid #d9d9d9; border-bottom: 1px solid #d9d9d9; padding-left: 4px; }
.act { background: #fff; height: 24px; }
.w1 { width: 63px; gap: 10px; } .w2 { width: 77px; padding-left: 6px; gap: 10px; } .w3 { width: 62px; gap: 10px; } .w4 { width: 73px; gap: 5px; padding-left: 5px; border-right: 0; }
.dtabs { display: flex; }
.dt { height: 21px; background: linear-gradient(#c8c8c8, #f0f0f0); border: 1px solid #8f8f8f; border-top: 0; border-radius: 0 0 3px 3px; display: flex; align-items: center; padding: 0 7px 0 5px; }
.dt span { flex: 1; text-align: center; letter-spacing: -0.55px; }
.w5 { width: 271px; } .w6 { width: 273px; } .w7 { width: 270px; }
.cur { height: 23px; background: linear-gradient(#eee, #fff); border-bottom: 3px solid #0b6fc8; }
.dt.cur span { letter-spacing: -0.35px; padding-top: 1px; }
.cl { width: 14px; height: 14px; background: #ababab; color: #fff; font: bold 11px/14px "DejaVu Sans", sans-serif; text-align: center; border-radius: 2px; letter-spacing: 0; }
.red { background: #dd6243; outline: 1px solid #c33b27; outline-offset: -1px; }
.bdots { height: 5px; margin-left: 455px; width: 453px; background: radial-gradient(circle at 2px 2px, #c0c0c0 1px, transparent 1.5px) 0 0 / 5px 5px; }
.bottom { margin-top: 1px; height: 18px; }
.bottom span { letter-spacing: -0.6px; }
.heads { height: 22px; display: flex; line-height: 19px; text-align: center; letter-spacing: -0.35px; }
.heads b { width: 680px; } .heads .h2 { width: 686px; padding-left: 6px; }
.lists { height: 64px; display: flex; padding-left: 4px; gap: 6px; }
.lb { width: 220.5px; border: 1px solid #828790; background: #fff; padding-left: 4px; }
.lh { height: 24px; padding-top: 4px; display: flex; justify-content: space-between; border-right: 1px solid #e3e3e3; }
.lh i { border: 5px solid transparent; border-bottom: 5px solid #999; border-top: 0; margin: 2px 10px 0 0; height: 5px; }
.lr { display: flex; align-items: center; height: 16px; padding-left: 2px; }
.lr span { margin-left: 6px; letter-spacing: -0.45px; }
.sdots { width: 3px; height: 22px; margin: 24px -2px 0 0; background: radial-gradient(circle at 1px 2px, #c0c0c0 1px, transparent 1.5px) 0 0 / 3px 5px; }
.props { width: 672px; margin-left: -1px; border: 1px solid #828790; background: #fff; display: flex; overflow: hidden; }
.pt { width: 654px; }
.pr { display: flex; height: 16px; letter-spacing: -0.3px; }
.pr span { width: 327px; padding-left: 3px; }
.ph { height: 24px; }
.ph span { padding: 4px 10px 0 4px; border-right: 1px solid #e3e3e3; display: flex; justify-content: space-between; }
.ph i { border: 5px solid transparent; border-top: 5px solid #999; border-bottom: 0; margin-top: 2px; height: 5px; }
.pr.g { background: #e8e8e8; border: 0; }
.props .vs { height: 62px; margin-left: 1px; }
.btabs { display: flex; height: 24px; margin-top: 4px; border-top: 1px solid #a0a0a0; padding-left: 2px; font-size: 11px; letter-spacing: -0.4px; }
.btabs .lt { height: 21px; }
.btabs .act { margin-top: -1px; height: 24px; }
.c1 { width: 78px; gap: 10px; } .c2 { width: 71px; gap: 10px; } .c3 { width: 87px; padding-left: 6px; gap: 10px; } .c4 { width: 133px; padding-left: 7px; gap: 9px; } .c5 { width: 128px; padding-left: 9px; gap: 9px; letter-spacing: -0.5px; }
.coord { height: 21px; text-align: right; padding: 3px 4px 0 0; letter-spacing: -0.4px; }

.task { height: 40px; background: linear-gradient(90deg, #061019 0, #0a161c 420px, #12161a 560px, #100f10 800px, #0b1118 950px, #171310 1000px, #1a1714 1366px); display: flex; margin-top: auto; color: #fff; }
.cell { width: 49px; display: flex; align-items: center; justify-content: center; }
.start { width: 48px; }
.search { width: 344px; background: #f2f2f2; color: #444; display: flex; align-items: center; padding: 0 14px 0 9px; font-size: 14.5px; letter-spacing: -0.3px; border-top: 1px solid #ccc; }
.search span { flex: 1; margin-left: 9px; padding-bottom: 2px; }
.ed { width: 52px; } .fx { width: 47px; border-bottom: 2px solid #9bcdf5; }
.ise { width: 48px; margin-left: 1px; background: #3d3d40; border-bottom: 2px solid #9bcdf5; }
.tray { margin-left: auto; width: 287px; display: flex; align-items: center; }
.tray::after { content: ""; width: 1px; height: 40px; margin-left: 20px; background: #777; }
.crt { margin-left: 22px; } .bat { margin-left: 11px; } .wif { margin-left: 10px; } .vol { margin-left: 7px; } .eng { margin-left: 10px; }
.clock { display: flex; flex-direction: column; align-items: center; line-height: 18px; width: 60px; margin-left: 12px; }
.ntf { margin-left: 17px; }
```
